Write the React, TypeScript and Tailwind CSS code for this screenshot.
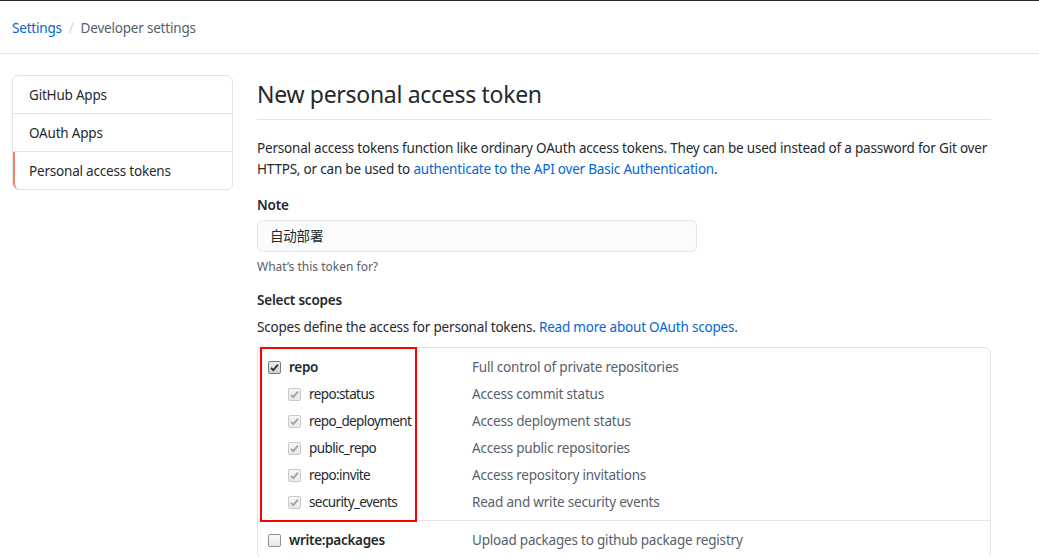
import React from "react";

const font = {
  fontFamily: '"Noto Sans", "Noto Sans CJK SC", sans-serif',
};

interface Scope {
  name: string;
  desc: string;
  sub?: boolean;
  checked?: boolean;
}

const repoScopes: Scope[] = [
  { name: "repo", desc: "Full control of private repositories", checked: true },
  { name: "repo:status", desc: "Access commit status", sub: true },
  { name: "repo_deployment", desc: "Access deployment status", sub: true },
  { name: "public_repo", desc: "Access public repositories", sub: true },
  { name: "repo:invite", desc: "Access repository invitations", sub: true },
  { name: "security_events", desc: "Read and write security events", sub: true },
];

function Checkbox({ state }: { state: "checked" | "sub" | "off" }) {
  if (state === "off") {
    return (
      <span className="inline-block shrink-0 w-[13px] h-[13px] rounded-[2px] border border-[#8f8f8f] bg-gradient-to-b from-[#fdfdfd] to-[#e6e6e6]" />
    );
  }
  const dim = state === "sub";
  return (
    <span
      className={
        dim
          ? "relative inline-block shrink-0 w-[13px] h-[13px] rounded-[2px] border border-[#c9c9c9] bg-gradient-to-b from-[#f6f6f6] to-[#e9e9e9]"
          : "relative inline-block shrink-0 w-[13px] h-[13px] rounded-[2px] border border-[#7a7a7a] bg-gradient-to-b from-[#eeeeee] to-[#cfcfcf]"
      }
    >
      <svg viewBox="0 0 13 13" className="absolute -left-px -top-px w-[13px] h-[13px]">
        <path
          d="M3 6.8 L5.3 9.1 L10 3.6"
          fill="none"
          stroke={dim ? "#a3a3a3" : "#333"}
          strokeWidth="1.9"
        />
      </svg>
    </span>
  );
}

function ScopeRow({ s }: { s: Scope }) {
  return (
    <div className="flex items-center h-[27px]">
      <div className={s.sub ? "w-[204px] flex items-center pl-5" : "w-[204px] flex items-center"}>
        <Checkbox state={s.sub ? "sub" : s.checked ? "checked" : "off"} />
        <span
          className={
            s.sub
              ? "ml-2 tracking-[-0.6px] text-[#24292e]"
              : "ml-2 tracking-[-0.3px] font-semibold text-[#24292e]"
          }
        >
          {s.name}
        </span>
      </div>
      <div className="text-[#586069]">{s.desc}</div>
    </div>
  );
}

export default function App() {
  return (
    <div style={font} className="min-h-screen bg-white text-[13.5px] tracking-[-0.2px] leading-[21px] text-[#24292e]">
      <div className="h-px bg-[#24292e]" />
      <div className="h-[53px] pt-[2px] px-3 flex items-center border-b border-[#e1e4e8]">
        <a className="text-[#0366d6]">Settings</a>
        <span className="mx-[7px] text-[#d1d5da]">/</span>
        <span className="text-[#586069]">Developer settings</span>
      </div>

      <div className="flex pt-[21px] pl-3">
        {/* Sidebar */}
        <nav className="w-[221px] shrink-0 border border-[#e1e4e8] rounded-md bg-white self-start">
          <div className="h-[38px] pt-px flex items-center px-4 border-b border-[#e1e4e8]">GitHub Apps</div>
          <div className="h-[38px] pt-px flex items-center px-4 border-b border-[#e1e4e8]">OAuth Apps</div>
          <div className="h-[37px] pt-px flex items-center pl-[14px] pr-4 border-l-2 border-[#f9826c] rounded-bl-md">
            Personal access tokens
          </div>
        </nav>

        {/* Main */}
        <main className="ml-6 w-[734px]">
          <div className="pt-px pb-[7px] border-b border-[#e1e4e8]">
            <h1 className="text-[23px] tracking-[-0.3px] leading-[36px] font-normal">New personal access token</h1>
          </div>

          <p className="mt-[18px] whitespace-nowrap">
            Personal access tokens function like ordinary OAuth access tokens. They can be used instead of a password for Git over
            <br />
            HTTPS, or can be used to{" "}
            <a className="text-[#0366d6]">authenticate to the API over Basic Authentication</a>.
          </p>

          <div className="mt-[15px] font-semibold">Note</div>
          <div className="mt-[4px] w-[440px] h-8 rounded-md border border-[#e1e4e8] bg-[#fafbfc] flex items-center px-3">
            自动部署
          </div>
          <div className="mt-[6px] text-[12px] tracking-normal leading-[18px] text-[#586069]">What’s this token for?</div>

          <div className="mt-[14px] font-semibold">Select scopes</div>
          <div className="mt-[6px]">
            Scopes define the access for personal tokens.{" "}
            <a className="text-[#0366d6]">Read more about OAuth scopes.</a>
          </div>

          <div className="relative mt-[9px] border border-[#e1e4e8] rounded-md">
            <div className="pt-[6px] pb-[4px] pl-[10px] border-b border-[#e1e4e8]">
              {repoScopes.map((s) => (
                <ScopeRow key={s.name} s={s} />
              ))}
            </div>
            <div className="pt-[6px] pb-[4px] pl-[10px]">
              <ScopeRow s={{ name: "write:packages", desc: "Upload packages to github package registry" }} />
            </div>
            {/* annotation */}
            <div className="absolute left-[2px] -top-px w-[157px] h-[175px] border-2 border-[#f00] pointer-events-none" />
          </div>
        </main>
      </div>
    </div>
  );
}
